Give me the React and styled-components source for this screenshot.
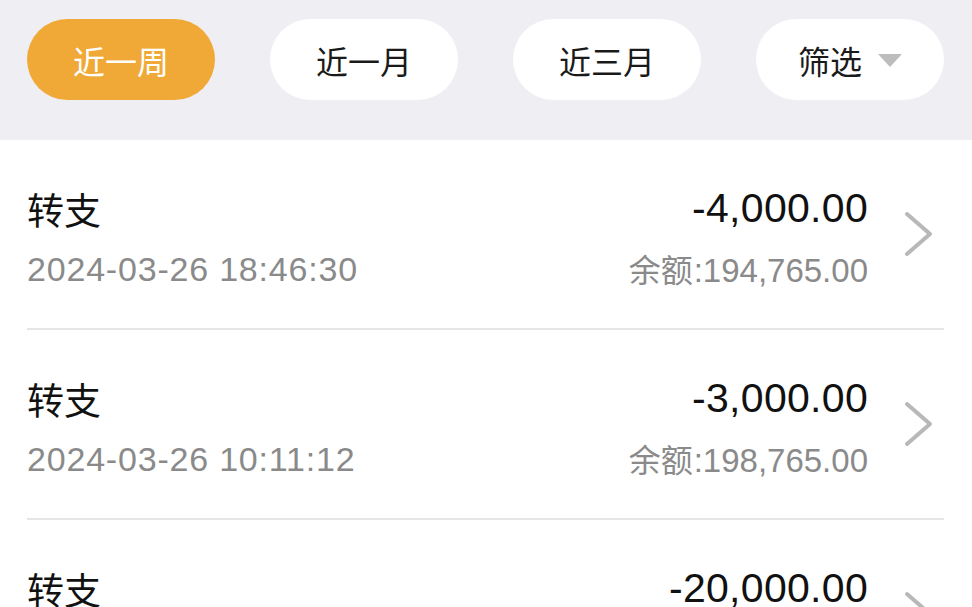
import React from "react";
import styled, { createGlobalStyle } from "styled-components";

const Global = createGlobalStyle`
  html, body { margin: 0; padding: 0; background: #ffffff; }
  body {
    width: 972px; height: 607px; overflow: hidden;
    font-family: "Liberation Sans", Roboto, "Noto Sans CJK SC", sans-serif;
    -webkit-font-smoothing: antialiased;
  }
`;

const Page = styled.div`
  width: 972px;
  height: 607px;
  overflow: hidden;
  background: #ffffff;
`;

const FilterBar = styled.div`
  display: flex;
  justify-content: space-between;
  align-items: center;
  padding: 19px 28px 40px 27px;
  background: #efeef3;
`;

const Pill = styled.button`
  width: 188px;
  height: 81px;
  border: none;
  border-radius: 41px;
  background: ${(p) => (p.$active ? "#f0a936" : "#ffffff")};
  color: ${(p) => (p.$active ? "#ffffff" : "#1a1a1a")};
  font-family: "Noto Sans CJK SC", sans-serif;
  font-size: 32px;
  display: flex;
  align-items: center;
  justify-content: center;
  gap: 16px;
  padding: 0;
  cursor: pointer;
`;

const Caret = styled.span`
  width: 0;
  height: 0;
  border-left: 12px solid transparent;
  border-right: 12px solid transparent;
  border-top: 13px solid #bdbdbd;
  margin-top: 2px;
`;

const List = styled.div`
  display: flex;
  flex-direction: column;
`;

const Row = styled.div`
  padding: 0 28px 0 27px;
`;

const RowInner = styled.div`
  height: 190px;
  box-sizing: border-box;
  display: flex;
  align-items: center;
  border-bottom: 2px solid #e5e5e5;
`;

const Column = styled.div`
  display: flex;
  flex-direction: column;
  gap: 20px;
  padding-top: 10px;
  ${(p) => (p.$right ? "align-items: flex-end;" : "flex: 1;")}
`;

const Title = styled.div`
  font-family: "Noto Sans CJK SC", sans-serif;
  font-size: 37px;
  line-height: 40px;
  color: #111111;
`;

const Amount = styled.div`
  font-size: 41px;
  line-height: 40px;
  color: #111111;
  letter-spacing: 0.3px;
`;

const Sub = styled.div`
  font-size: ${(p) => (p.$date ? "34px" : "33px")};
  line-height: 40px;
  color: #8a8a8a;
  letter-spacing: ${(p) => (p.$date ? "0.8px" : "0")};
`;

const SubCJK = styled.span`
  font-family: "Noto Sans CJK SC", sans-serif;
  font-size: 32px;
  margin-right: 1px;
`;

const Chevron = styled.svg`
  width: 30px;
  height: 46px;
  margin-left: 36px;
  margin-right: 10px;
  flex-shrink: 0;
`;

const filters = [
  { label: "近一周", active: true },
  { label: "近一月" },
  { label: "近三月" },
  { label: "筛选", caret: true },
];

const rows = [
  { title: "转支", date: "2024-03-26 18:46:30", amount: "-4,000.00", balance: "194,765.00" },
  { title: "转支", date: "2024-03-26 10:11:12", amount: "-3,000.00", balance: "198,765.00" },
  { title: "转支", date: "2024-03-25 16:20:08", amount: "-20,000.00", balance: "218,765.00" },
];

export default function App() {
  return (
    <Page>
      <Global />
      <FilterBar>
        {filters.map((f) => (
          <Pill key={f.label} $active={f.active}>
            {f.label}
            {f.caret && <Caret />}
          </Pill>
        ))}
      </FilterBar>
      <List>
        {rows.map((r, i) => (
          <Row key={i}>
            <RowInner>
              <Column>
                <Title>{r.title}</Title>
                <Sub $date>{r.date}</Sub>
              </Column>
              <Column $right>
                <Amount>{r.amount}</Amount>
                <Sub>
                  <SubCJK>余额</SubCJK>:{r.balance}
                </Sub>
              </Column>
              <Chevron viewBox="0 0 30 46">
                <path d="M3 3 L26 23 L3 43" fill="none" stroke="#b8b8b8" strokeWidth="4" strokeLinecap="round" strokeLinejoin="round" />
              </Chevron>
            </RowInner>
          </Row>
        ))}
      </List>
    </Page>
  );
}
